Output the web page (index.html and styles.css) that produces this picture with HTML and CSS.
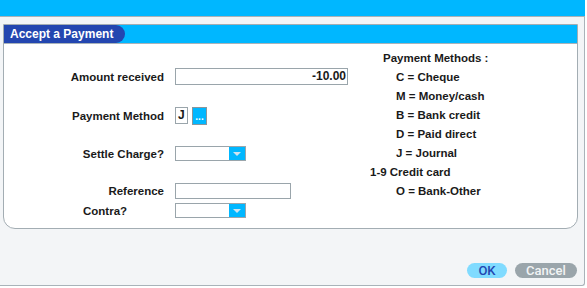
FILE: index.html
```html
<!DOCTYPE html>
<html lang="en">
<head>
    <meta charset="UTF-8">
    <title>Accept a Payment</title>
    <link rel="stylesheet" href="styles.css">
</head>
<body>
    <div class="window">
        <div class="topbar"></div>
        <div class="dialog">
            <div class="panel">
                <div class="panel-head">
                    <span class="tab">Accept a Payment</span>
                </div>
                <div class="panel-body">
                    <div class="form">
                        <div class="row row-tall">
                            <label class="label">Amount received</label>
                            <div class="input amount">-10.00</div>
                        </div>
                        <div class="row row-tall">
                            <label class="label">Payment Method</label>
                            <div class="code">J</div>
                            <button class="more">...</button>
                        </div>
                        <div class="row">
                            <label class="label">Settle Charge?</label>
                            <div class="select"><span class="arrow"></span></div>
                        </div>
                        <div class="group">
                            <div class="row">
                                <label class="label">Reference</label>
                                <div class="input reference"></div>
                            </div>
                            <div class="row">
                                <label class="label left">Contra?</label>
                                <div class="select"><span class="arrow"></span></div>
                            </div>
                        </div>
                    </div>
                    <ul class="methods">
                        <li class="heading">Payment Methods :</li>
                        <li>C = Cheque</li>
                        <li>M = Money/cash</li>
                        <li>B = Bank credit</li>
                        <li>D = Paid direct</li>
                        <li>J = Journal</li>
                        <li class="outdent">1-9 Credit card</li>
                        <li>O = Bank-Other</li>
                    </ul>
                </div>
            </div>
            <div class="actions">
                <button class="btn ok">OK</button>
                <button class="btn cancel">Cancel</button>
            </div>
        </div>
    </div>
</body>
</html>
```

FILE: styles.css
```css
* {
    margin: 0;
    padding: 0;
    box-sizing: border-box;
}
body {
    background: #fff;
    font-family: "Liberation Sans", Arial, sans-serif;
    color: #1a1a1a;
}
.window {
    width: 585px;
}
.topbar {
    height: 17px;
    background: #00b7ff;
    border-bottom: 1px solid #a9b3b9;
}
.dialog {
    height: 269px;
    padding: 7px 0 0 3px;
    background: #f3f5f7;
    border-right: 1px solid #a9b3b9;
    border-bottom: 1px solid #a9b3b9;
    border-bottom-right-radius: 3px;
}
.panel {
    width: 575px;
    height: 205px;
    background: #fff;
    border: 1px solid #a3adb3;
    border-radius: 0 0 12px 12px;
}
.panel-head {
    display: flex;
    height: 19px;
    background: #00b7ff;
    border-bottom: 1px solid #a9b3b9;
}
.tab {
    display: flex;
    align-items: center;
    width: 121px;
    padding-left: 6px;
    background: #2346b0;
    color: #fff;
    font-size: 12px;
    font-weight: bold;
    border-radius: 0 9px 9px 0;
}
.panel-body {
    display: flex;
}
.form {
    display: flex;
    flex-direction: column;
    gap: 22px;
    width: 366px;
    padding-top: 24px;
}
.group {
    display: flex;
    flex-direction: column;
    gap: 5px;
}
.row {
    display: flex;
    align-items: center;
    height: 15px;
}
.row-tall {
    height: 17px;
}
.label {
    width: 160px;
    margin-right: 11px;
    text-align: right;
    font-size: 11.5px;
    font-weight: bold;
}
.label.left {
    text-align: left;
    padding-left: 79px;
}
.input {
    height: 100%;
    border: 1px solid #9aa5ab;
    background: #fff;
}
.amount {
    width: 173px;
    padding-right: 1px;
    text-align: right;
    font-size: 12px;
    font-weight: bold;
    line-height: 15px;
}
.reference {
    width: 116px;
    height: 16px;
}
.code {
    width: 13px;
    height: 17px;
    border: 1px solid #9aa5ab;
    font-size: 12px;
    font-weight: bold;
    line-height: 15px;
    padding-left: 2px;
}
.more {
    width: 15px;
    height: 18px;
    margin-left: 4px;
    background: #00b7ff;
    border: 1px solid #8a969c;
    color: #fff;
    font-family: "Liberation Sans", Arial, sans-serif;
    font-size: 10px;
    font-weight: bold;
    line-height: 18px;
}
.select {
    display: flex;
    justify-content: flex-end;
    width: 71px;
    height: 15px;
    border: 1px solid #9aa5ab;
    background: #fff;
}
.arrow {
    display: flex;
    align-items: center;
    justify-content: center;
    width: 16px;
    background: #00b7ff;
}
.arrow::after {
    content: "";
    border-left: 4px solid transparent;
    border-right: 4px solid transparent;
    border-top: 4px solid #cfe3ef;
}
.methods {
    list-style: none;
    padding-top: 5px;
    font-size: 11.5px;
    font-weight: bold;
    line-height: 19px;
}
.methods li {
    padding-left: 26px;
}
.methods .heading {
    padding-left: 13px;
}
.methods .outdent {
    padding-left: 0;
}
.actions {
    display: flex;
    justify-content: flex-end;
    gap: 8px;
    padding: 34px 7px 0 0;
}
.btn {
    height: 15px;
    border: none;
    border-radius: 8px;
    font-family: Roboto, "Liberation Sans", sans-serif;
    font-size: 13px;
    font-weight: 500;
    line-height: 15px;
}
.ok {
    width: 40px;
    background: #80dbff;
    color: #2346b0;
}
.cancel {
    width: 62px;
    background: #9aa5ab;
    color: #f2f4f5;
}
```
